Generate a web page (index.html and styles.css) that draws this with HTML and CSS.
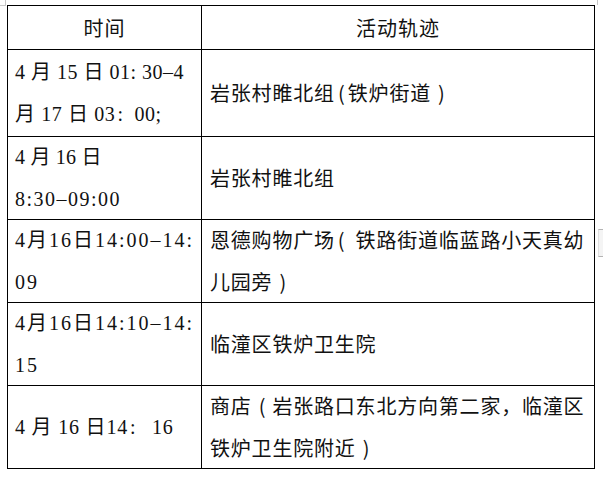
FILE: index.html
```html
<!DOCTYPE html>
<html lang="zh-CN">
<head>
<meta charset="utf-8">
<title>活动轨迹</title>
<link rel="stylesheet" href="styles.css">
</head>
<body>
<div class="page">
  <span class="mark mark-tl"></span>
  <span class="mark mark-tr"></span>
  <span class="mark mark-side"></span>
  <div class="grid">
    <div class="cell head">时间</div>
    <div class="cell head">活动轨迹</div>

    <div class="cell time"><span class="ln s05">4 月 15 日 01: 30–4</span><span class="ln s06">月 17 日 03<span class="cw cw-a">:</span>00;</span></div>
    <div class="cell place"><span class="ln">岩张村睢北组<span class="ph">(</span>铁炉街道<span class="pw">)</span></span></div>

    <div class="cell time"><span class="ln s02">4 月 16 日</span><span class="ln s15">8:30–09:00</span></div>
    <div class="cell place"><span class="ln">岩张村睢北组</span></div>

    <div class="cell time"><span class="ln s2">4月16日14:00–14:</span><span class="ln s2">09</span></div>
    <div class="cell place"><span class="ln">恩德购物广场<span class="pw pl">(</span>铁路街道临蓝路小天真幼</span><span class="ln">儿园旁<span class="pw">)</span></span></div>

    <div class="cell time"><span class="ln s2">4月16日14:10–14:</span><span class="ln s2">15</span></div>
    <div class="cell place"><span class="ln">临潼区铁炉卫生院</span></div>

    <div class="cell time"><span class="ln s08">4 月 16 日14<span class="cw cw-b">:</span>16</span></div>
    <div class="cell place"><span class="ln">商店<span class="pw">(</span>岩张路口东北方向第二家，临潼区</span><span class="ln">铁炉卫生院附近<span class="pw">)</span></span></div>
  </div>
</div>
</body>
</html>
```

FILE: styles.css
```css
html, body {
  margin: 0;
  padding: 0;
  background: #ffffff;
}

.page {
  position: relative;
  width: 603px;
  height: 478px;
  padding: 5px 0 0 7px;
  box-sizing: border-box;
}

.grid {
  display: grid;
  grid-template-columns: 194px 393px;
  grid-template-rows: 44px 87px 83px 83px 83px 83px;
  border-top: 1px solid #000;
  border-left: 1px solid #000;
  width: max-content;
  color: #111;
  font-size: 20px;
  line-height: 42px;
}

.cell {
  border-right: 1px solid #000;
  border-bottom: 1px solid #000;
  display: flex;
  flex-direction: column;
  justify-content: center;
  white-space: nowrap;
}

.head {
  align-items: center;
  font-family: "Noto Sans CJK SC", sans-serif;
  letter-spacing: 1px;
  line-height: 44px;
}

.time {
  padding-left: 7px;
  font-family: "Liberation Serif", "Noto Sans CJK SC", serif;
}

.place {
  padding-left: 8px;
  font-family: "Noto Sans CJK SC", sans-serif;
  letter-spacing: 0.8px;
}

.ln {
  display: block;
  height: 42px;
}

.pw {
  display: inline-block;
  width: 20.8px;
  text-align: center;
  letter-spacing: 0;
}

.pl {
  text-align: left;
  padding-left: 3px;
  width: 17.8px;
}

.ph {
  display: inline-block;
  width: 13px;
  text-align: center;
  letter-spacing: 0;
}

.cw {
  display: inline-block;
  padding-left: 2px;
  letter-spacing: 0;
}

.cw-a { width: 17px; }
.cw-b { width: 22px; }

.s02 { letter-spacing: 0.2px; }
.s05 { letter-spacing: 0.5px; }
.s06 { letter-spacing: 0.6px; }
.s08 { letter-spacing: 0.8px; }
.s15 { letter-spacing: 1.5px; }
.s2 { letter-spacing: 2px; }

.mark {
  position: absolute;
  display: block;
}

.mark-tl {
  left: 0;
  top: 0;
  width: 5px;
  height: 5px;
  border-right: 1px solid #c8c8c8;
  border-bottom: 1px solid #c8c8c8;
}

.mark-tr {
  left: 597px;
  top: 0;
  width: 1px;
  height: 5px;
  background: #c8c8c8;
}

.mark-side {
  left: 598px;
  top: 229px;
  width: 5px;
  height: 26px;
  background: #f4f4f4;
  border-top: 1px solid #b4b4b4;
  border-bottom: 1px solid #b4b4b4;
  border-left: 1px solid #e0e0e0;
}
```
